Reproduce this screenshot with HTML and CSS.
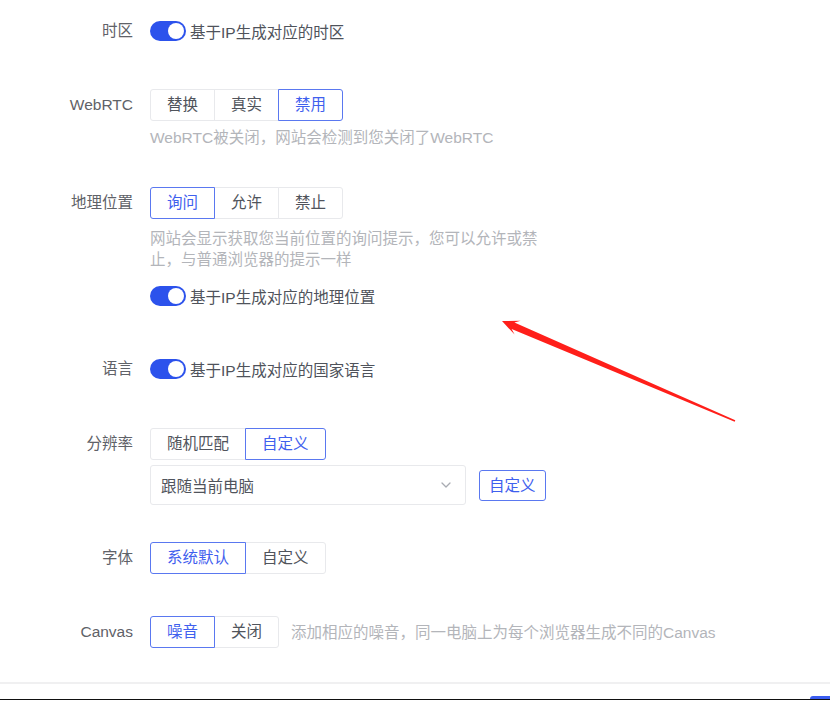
FILE: index.html
```html
<!DOCTYPE html>
<html lang="zh-CN">
<head>
<meta charset="utf-8">
<title>设置</title>
<link rel="stylesheet" href="styles.css">
</head>
<body>
<div class="page">
  <div class="form">
    <div class="item item-tz">
      <div class="label">时区</div>
      <div class="control">
        <div class="switch-row"><span class="switch"><span class="knob"></span></span><span class="switch-text">基于IP生成对应的时区</span></div>
      </div>
    </div>

    <div class="item item-rtc">
      <div class="label">WebRTC</div>
      <div class="control">
        <div class="seg">
          <button class="seg-btn">替换</button><button class="seg-btn">真实</button><button class="seg-btn active">禁用</button>
        </div>
        <div class="desc desc-rtc">WebRTC被关闭，网站会检测到您关闭了WebRTC</div>
      </div>
    </div>

    <div class="item item-geo">
      <div class="label">地理位置</div>
      <div class="control">
        <div class="seg">
          <button class="seg-btn active">询问</button><button class="seg-btn">允许</button><button class="seg-btn">禁止</button>
        </div>
        <div class="desc desc-geo">网站会显示获取您当前位置的询问提示，您可以允许或禁止，与普通浏览器的提示一样</div>
        <div class="switch-row switch-geo"><span class="switch"><span class="knob"></span></span><span class="switch-text">基于IP生成对应的地理位置</span></div>
      </div>
    </div>

    <div class="item item-lang">
      <div class="label">语言</div>
      <div class="control">
        <div class="switch-row"><span class="switch"><span class="knob"></span></span><span class="switch-text">基于IP生成对应的国家语言</span></div>
      </div>
    </div>

    <div class="item item-res">
      <div class="label">分辨率</div>
      <div class="control">
        <div class="seg">
          <button class="seg-btn">随机匹配</button><button class="seg-btn active">自定义</button>
        </div>
        <div class="select-row">
          <div class="select">
            <span class="select-text">跟随当前电脑</span>
            <svg class="chev" width="10" height="6" viewBox="0 0 10 6"><path d="M1 1l4 4 4-4" fill="none" stroke="#a8abb2" stroke-width="1.3" stroke-linecap="round" stroke-linejoin="round"/></svg>
          </div>
          <button class="btn-outline">自定义</button>
        </div>
      </div>
    </div>

    <div class="item item-font">
      <div class="label">字体</div>
      <div class="control">
        <div class="seg">
          <button class="seg-btn active">系统默认</button><button class="seg-btn">自定义</button>
        </div>
      </div>
    </div>

    <div class="item item-canvas">
      <div class="label">Canvas</div>
      <div class="control control-inline">
        <div class="seg">
          <button class="seg-btn active">噪音</button><button class="seg-btn">关闭</button>
        </div>
        <div class="desc desc-inline">添加相应的噪音，同一电脑上为每个浏览器生成不同的Canvas</div>
      </div>
    </div>
  </div>

  <div class="footer">
    <span class="footer-btn"></span>
  </div>

  <svg class="arrow" width="830" height="701" viewBox="0 0 830 701">
    <polygon fill="#ff1f1a" points="502,321 520.6,320.8 514.4,322.5 735.3,420.3 734.7,421.7 511.6,328.9 514.6,334.6"/>
  </svg>
</div>
</body>
</html>
```

FILE: styles.css
```css
html, body {
  margin: 0;
  padding: 0;
  background: #ffffff;
  overflow: hidden;
}

body {
  font-family: "Liberation Sans", "Noto Sans CJK SC", sans-serif;
  font-size: 15.5px;
  color: #555a63;
}

.page {
  position: relative;
  width: 830px;
  height: 701px;
}

.form {
  padding-top: 15px;
}

.item {
  display: flex;
  align-items: flex-start;
  gap: 17px;
}

.label {
  width: 133px;
  flex: none;
  text-align: right;
  line-height: 32px;
  height: 32px;
  color: #5f6268;
}

.control {
  display: flex;
  flex-direction: column;
  align-items: flex-start;
}

.control-inline {
  flex-direction: row;
  align-items: center;
  gap: 12px;
}

.item-tz { margin-bottom: 42px; }
.item-rtc { margin-bottom: 39px; }
.item-geo { margin-bottom: 41px; }
.item-lang { margin-bottom: 43px; }
.item-res { margin-bottom: 37px; }
.item-font { margin-bottom: 42px; }

.switch-row {
  display: flex;
  align-items: center;
  height: 32px;
  gap: 4px;
}

.switch {
  width: 36px;
  height: 20px;
  border-radius: 10px;
  background: #2c52ec;
  display: flex;
  align-items: center;
  justify-content: flex-end;
  padding: 0 2px;
  box-sizing: border-box;
}

.knob {
  width: 16px;
  height: 16px;
  border-radius: 50%;
  background: #ffffff;
}

.switch-text {
  color: #4f535b;
}

.switch-geo {
  margin-top: 10px;
}

.seg {
  display: flex;
  height: 32px;
}

.seg-btn {
  font: inherit;
  color: #50545c;
  background: #ffffff;
  border: 1px solid #e8e9ec;
  height: 32px;
  padding: 0 16px;
  margin: 0 0 0 -1px;
  line-height: 30px;
  cursor: pointer;
  position: relative;
}

.seg-btn:first-child {
  margin-left: 0;
  border-radius: 3px 0 0 3px;
}

.seg-btn:last-child {
  border-radius: 0 3px 3px 0;
}

.seg-btn.active {
  color: #3f60ee;
  border-color: #5a78f0;
  z-index: 1;
}

.desc {
  color: #b3b5ba;
  line-height: 21px;
}

.desc-rtc {
  margin-top: 6px;
}

.desc-geo {
  margin-top: 9px;
  width: 392px;
}

.select-row {
  display: flex;
  align-items: center;
  gap: 13px;
  margin-top: 5px;
}

.select {
  width: 316px;
  height: 40px;
  box-sizing: border-box;
  border: 1px solid #e8e9ec;
  border-radius: 3px;
  display: flex;
  align-items: center;
  justify-content: space-between;
  padding: 0 14px 0 10px;
}

.select-text {
  color: #50545c;
}

.chev {
  display: block;
}

.btn-outline {
  font: inherit;
  color: #3f60ee;
  background: #ffffff;
  border: 1px solid #5a78f0;
  border-radius: 3px;
  height: 31px;
  padding: 0 9px;
  line-height: 29px;
}

.footer {
  position: relative;
  margin-top: 34px;
  border-top: 2px solid #f0f0f1;
  height: 15px;
  border-bottom: 1px solid #111111;
}

.footer-btn {
  position: absolute;
  right: 0;
  bottom: 0;
  width: 20px;
  height: 3px;
  background: #3a5cf0;
  border-radius: 3px 0 0 0;
}

.arrow {
  position: absolute;
  left: 0;
  top: 0;
  pointer-events: none;
}
```
